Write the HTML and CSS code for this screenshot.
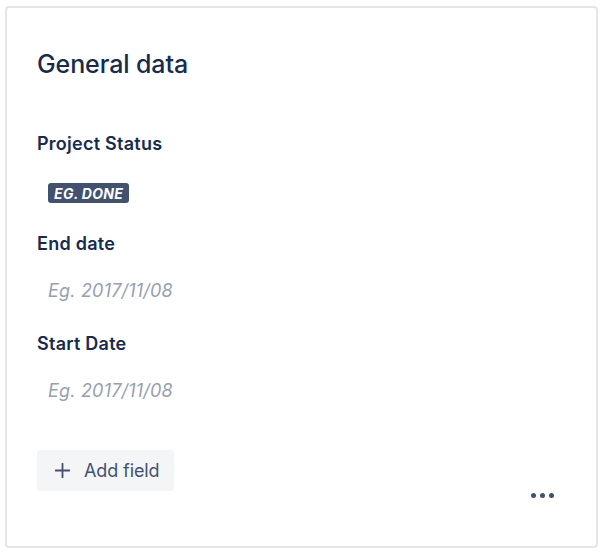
FILE: index.html
```html
<!DOCTYPE html>
<html>
<head>
<meta charset="utf-8">
<link rel="stylesheet" href="styles.css">
</head>
<body>
<div class="card">
  <h2 class="title">General data</h2>
  <div class="fields">
    <div class="field">
      <div class="label">Project Status</div>
      <div class="value value-lozenge"><span class="lozenge">Eg. Done</span></div>
    </div>
    <div class="field">
      <div class="label">End date</div>
      <div class="value"><span class="placeholder">Eg. 2017/11/08</span></div>
    </div>
    <div class="field">
      <div class="label">Start Date</div>
      <div class="value"><span class="placeholder">Eg. 2017/11/08</span></div>
    </div>
  </div>
  <div class="footer">
    <button class="add-btn" type="button">
      <svg class="plus" width="15" height="15" viewBox="0 0 15 15" aria-hidden="true"><path d="M7.5 0.5v14M0.5 7.5h14" stroke="#42526e" stroke-width="1.8" stroke-linecap="round" fill="none"/></svg>
      <span>Add field</span>
    </button>
    <div class="more" aria-label="More"><i></i><i></i><i></i></div>
  </div>
</div>
</body>
</html>
```

FILE: styles.css
```css
* { box-sizing: border-box; }
html, body { margin: 0; padding: 0; background: #fff; }
body {
  font-family: Inter, "Noto Sans", "Liberation Sans", sans-serif;
  color: #172b4d;
  padding: 6px 0 0 5px;
}
.card {
  width: 593px;
  height: 542px;
  border: 2px solid #e4e5e8;
  border-radius: 4px;
  padding: 40px 30px 0 30px;
  display: flex;
  flex-direction: column;
}
.title {
  margin: 0;
  font-size: 25px;
  line-height: 32px;
  font-weight: 500;
  color: #172b4d;
  letter-spacing: -0.1px;
}
.fields {
  margin-top: 52px;
  display: flex;
  flex-direction: column;
}
.field {
  height: 100px;
  display: flex;
  flex-direction: column;
}
.label {
  font-size: 18px;
  line-height: 24px;
  font-weight: 600;
  color: #172b4d;
  letter-spacing: 0.25px;
}
.value {
  padding: 16px 0 0 11px;
  height: 36px;
  display: flex;
  align-items: center;
  box-sizing: content-box;
}
.value-lozenge { padding-top: 19px; }
.lozenge {
  display: inline-flex;
  align-items: center;
  height: 20px;
  padding: 0 6px;
  border-radius: 3px;
  background: #42526e;
  color: #fff;
  font-size: 14px;
  font-weight: 700;
  font-style: italic;
  text-transform: uppercase;
  letter-spacing: 0.3px;
}
.placeholder {
  font-size: 18px;
  font-style: italic;
  color: #97a0af;
  letter-spacing: 0.2px;
}
.footer {
  margin-top: 18px;
  display: flex;
  justify-content: space-between;
  align-items: flex-start;
}
.add-btn {
  display: flex;
  align-items: center;
  gap: 14px;
  height: 41px;
  padding: 0 14px 0 18px;
  border: none;
  border-radius: 3px;
  background: #f4f5f7;
  color: #42526e;
  font-family: inherit;
  font-size: 18px;
  letter-spacing: -0.1px;
  cursor: pointer;
}
.plus { display: block; }
.more {
  display: flex;
  gap: 4px;
  margin-top: 43px;
  margin-right: 12px;
}
.more i {
  display: block;
  width: 5px;
  height: 5px;
  border-radius: 50%;
  background: #42526e;
}
```
